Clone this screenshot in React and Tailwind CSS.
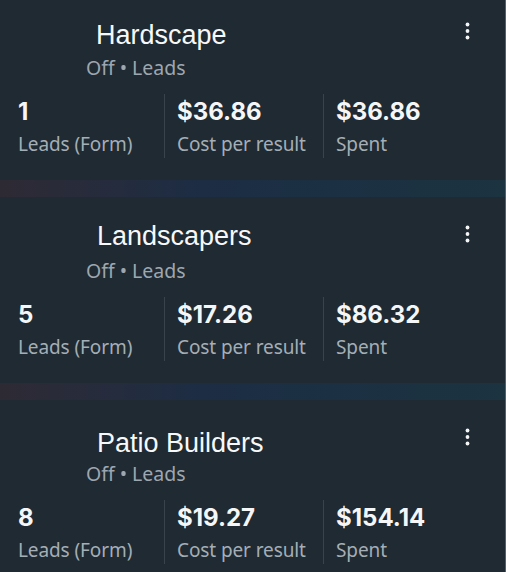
const campaigns = [
  {
    name: "Hardscape",
    titleCls: "mt-[25px] pl-[96px]",
    subCls: "mt-[5px]",
    leads: "1",
    cpr: "$36.86",
    spent: "$36.86",
  },
  {
    name: "Landscapers",
    titleCls: "mt-[23px] pl-[97px]",
    subCls: "mt-[7px]",
    leads: "5",
    cpr: "$17.26",
    spent: "$86.32",
  },
  {
    name: "Patio Builders",
    titleCls: "mt-[27px] pl-[97px]",
    subCls: "mt-[3px]",
    leads: "8",
    cpr: "$19.27",
    spent: "$154.14",
  },
];

function Kebab() {
  return (
    <button className="absolute top-[28px] right-[35px] p-0">
      <svg width="5" height="18" viewBox="0 0 5 18" fill="#f3f5f7">
        <circle cx="2.5" cy="2.5" r="1.9" />
        <circle cx="2.5" cy="9" r="1.9" />
        <circle cx="2.5" cy="15.5" r="1.9" />
      </svg>
    </button>
  );
}

function Stat({ value, label, cls }) {
  return (
    <div className={cls}>
      <div className="pt-[4px] font-['Inter',sans-serif] text-[24px] leading-[28px] font-bold text-[#f5f6f7]">
        {value}
      </div>
      <div className="mt-[6px] font-['Noto_Sans',sans-serif] text-[19px] tracking-[-0.1px] leading-[24px] text-[#a5aeb5]">
        {label}
      </div>
    </div>
  );
}

function CampaignCard({ c, first }) {
  return (
    <div className={`relative flex flex-col h-[186px] bg-[#1f2a33] ${first ? "-mt-[6px]" : ""}`}>
      <Kebab />
      <div className={`${c.titleCls} font-['Liberation_Sans',Arial,sans-serif] text-[27px] leading-[32px] text-[#f7f8f9]`}>
        {c.name}
      </div>
      <div className={`${c.subCls} pl-[86px] font-['Noto_Sans',sans-serif] text-[19.5px] leading-[24px] text-[#9ea7af]`}>
        Off • Leads
      </div>
      <div className="flex h-[64px] mt-[14px]">
        <Stat value={c.leads} label="Leads (Form)" cls="w-[164px] pl-[18px]" />
        <Stat value={c.cpr} label="Cost per result" cls="w-[159px] pl-[12px] border-l border-[#38434c]" />
        <Stat value={c.spent} label="Spent" cls="flex-1 pl-[12px] border-l border-[#38434c]" />
      </div>
    </div>
  );
}

export default function App() {
  return (
    <div className="flex flex-col w-[506px] h-[572px] overflow-hidden bg-[#1f2a33] border-r border-[#56606a]">
      {campaigns.map((c, i) => (
        <div key={c.name} className="flex flex-col shrink-0">
          <CampaignCard c={c} first={i === 0} />
          {i < campaigns.length - 1 && (
            <div className="h-[17px] bg-linear-to-r from-[#2e2a34] via-[#1c2d44] via-40% to-[#1b3440]" />
          )}
        </div>
      ))}
    </div>
  );
}
